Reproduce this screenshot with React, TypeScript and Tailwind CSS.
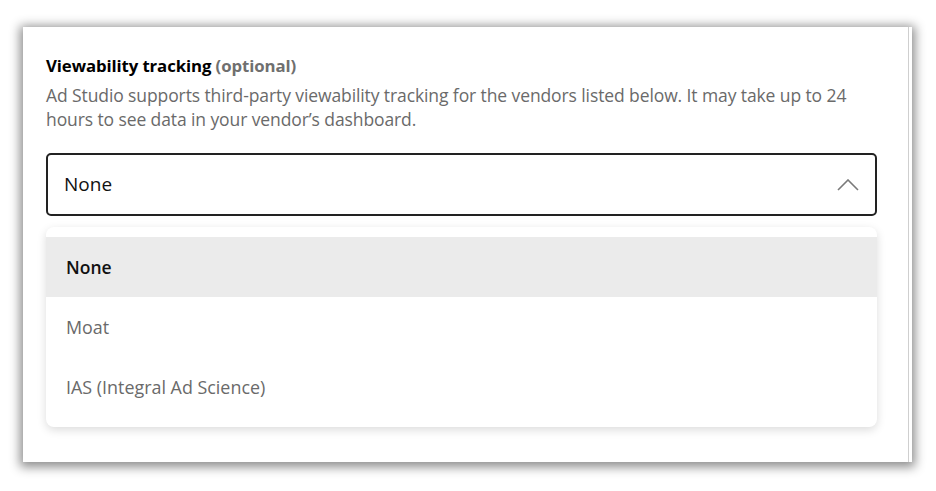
import React from 'react';

const options = ['None', 'Moat', 'IAS (Integral Ad Science)'];

const App: React.FC = () => {
  return (
    <div className="w-[936px] h-[491px] bg-white pt-[27px] pl-[23px]" style={{ fontFamily: '"Open Sans", "Liberation Sans", sans-serif' }}>
      <div className="w-[889px] h-[435px] bg-white shadow-[0_2px_10px_3px_rgba(0,0,0,0.45)] flex">
        <div className="flex-1 pl-[23px] pt-[28px]">
          <div className="w-[831px]">
            <h2 className="text-[16.8px] font-bold text-black leading-[22px] tracking-[-0.1px]">
              Viewability tracking <span className="text-[#6f6f6f]">(optional)</span>
            </h2>
            <p className="mt-[6px] text-[17.5px] leading-[24px] text-[#6a6a6a] tracking-[-0.1px]">
              Ad Studio supports third-party viewability tracking for the vendors listed below. It may take up to 24 hours to see data in your vendor’s dashboard.
            </p>

            <div className="mt-[22px] h-[63px] border-2 border-[#222] rounded-[5px] flex items-center justify-between pl-[16px] pr-[16px]">
              <span className="text-[19px] text-[#111]">None</span>
              <svg width="22" height="12" viewBox="0 0 22 12" fill="none">
                <path d="M1 11L11 1L21 11" stroke="#7a7a7a" strokeWidth="1.6" />
              </svg>
            </div>

            <div className="mt-[11px] rounded-[8px] bg-white shadow-[0_3px_10px_rgba(0,0,0,0.14)] py-[10px]">
              {options.map((o, i) => (
                <div
                  key={o}
                  className={
                    i === 0
                      ? 'h-[60px] flex items-center pl-[20px] bg-[#ebebeb] text-[17.5px] font-semibold text-[#111]'
                      : 'h-[60px] flex items-center pl-[20px] text-[17.9px] text-[#6a6a6a]'
                  }
                >
                  {o}
                </div>
              ))}
            </div>
          </div>
        </div>
        <div className="w-[4px] border-l border-[#cfcfcf]" />
      </div>
    </div>
  );
};

export default App;
